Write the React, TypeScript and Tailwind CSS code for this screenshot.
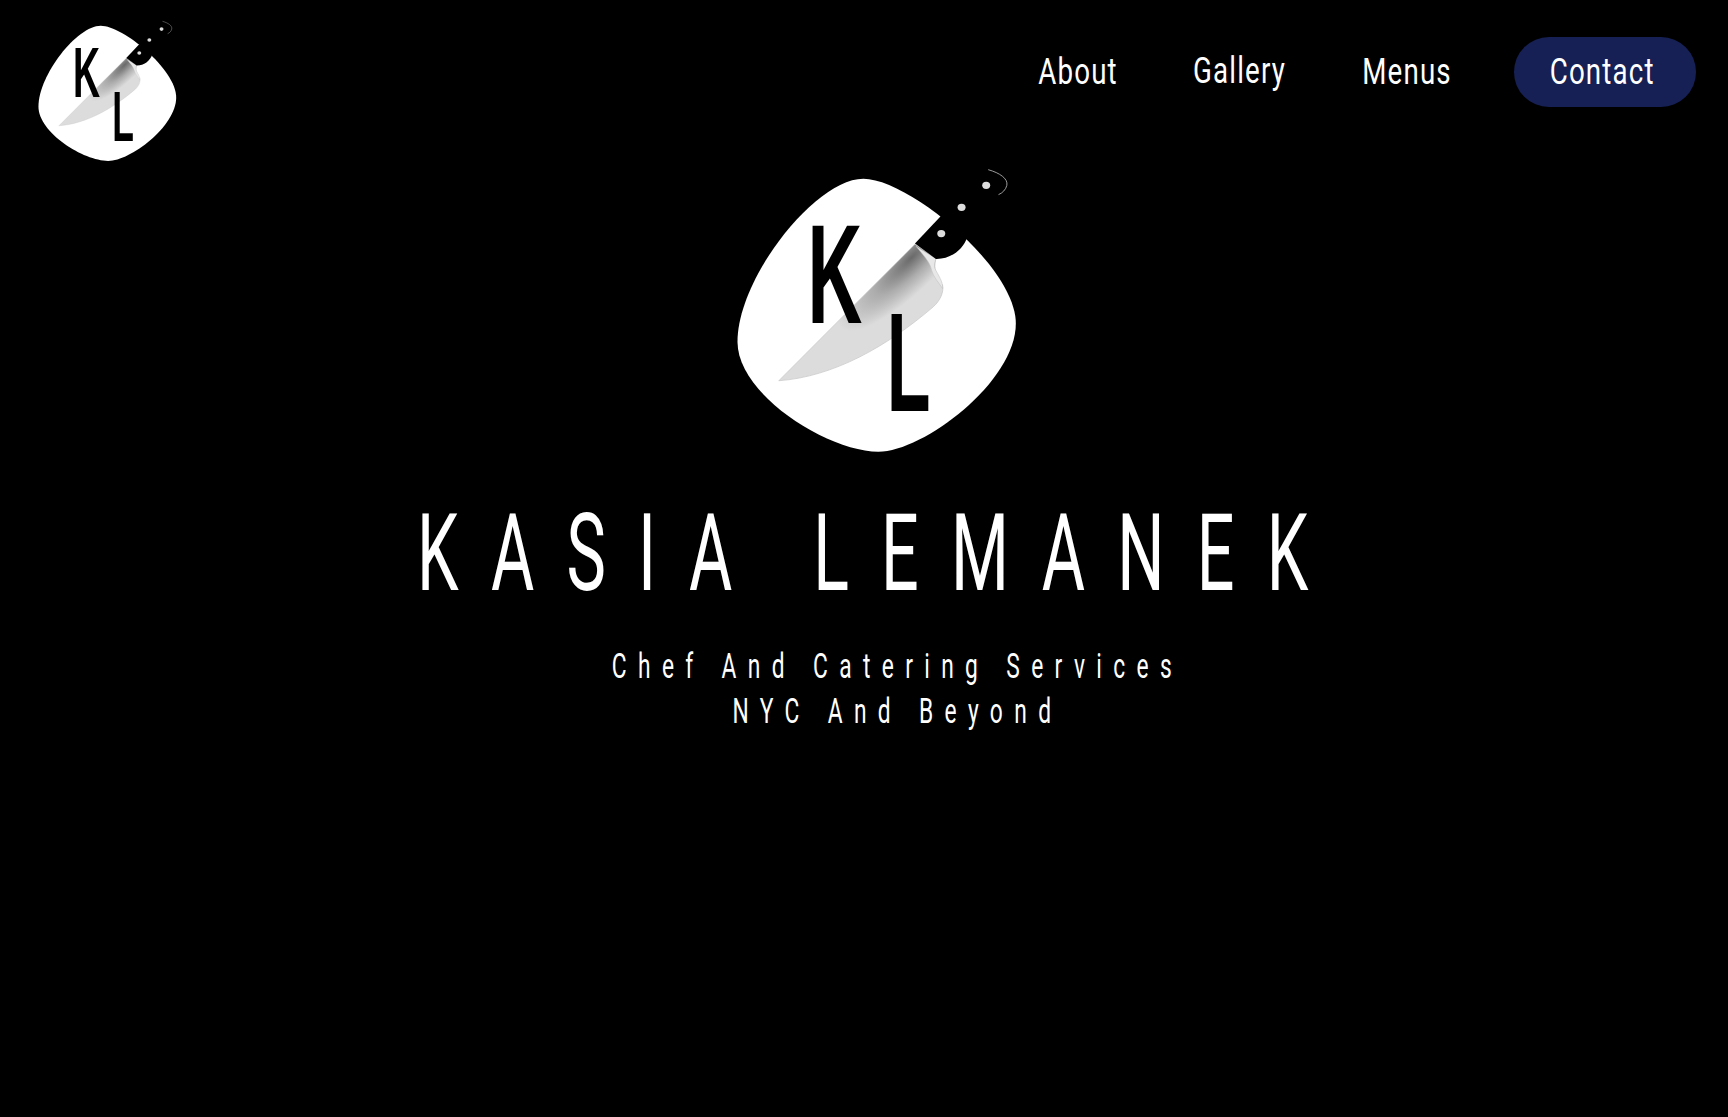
import React from "react";

function Logo({ id, className }: { id: string; className: string }) {
  return (
    <svg viewBox="0 50 1050 880" className={className}>
      <defs>
        <radialGradient id={id} gradientUnits="userSpaceOnUse" cx="0" cy="0" r="1" gradientTransform="translate(635,322) rotate(-45) scale(300,90)">
          <stop offset="0" stopColor="#6a6a6a" />
          <stop offset="0.5" stopColor="#acacac" />
          <stop offset="1" stopColor="#dcdcdc" />
        </radialGradient>
      </defs>
      <path
        d="M490,85 C625,85 948,350 948,520 C948,695 670,905 535,905 C385,905 112,735 112,575 C112,385 345,85 490,85 Z"
        fill="#fff"
      />
      <path d="M645,282 L236,692 C400,680 560,590 700,470 C722,450 732,425 728,405 C712,380 698,360 708,325 Z" fill={`url(#${id})`} stroke="#c4c4c4" strokeWidth="2" />
      <path d="M648,288 C670,315 690,335 695,360 C700,380 715,395 728,415 C730,395 715,375 705,355 C702,345 705,335 708,325 Z" fill="#e8e8e8" stroke="#bdbdbd" strokeWidth="1.5" />
      <path d="M645,280 L725,195 L803,258 C790,300 750,327 708,326 Z" fill="#000" />
      <ellipse cx="724" cy="250" rx="12" ry="11" fill="#ddd" />
      <ellipse cx="785" cy="171" rx="12" ry="11" fill="#ddd" />
      <ellipse cx="859" cy="105" rx="12" ry="11" fill="#ddd" />
      <path d="M865,58 C900,68 925,85 921,105 C918,118 908,128 896,133" fill="none" stroke="#bbb" strokeWidth="2.5" />
      <text x="0" y="0" transform="translate(322,518) scale(0.54,1)" fontFamily="'Liberation Sans'" fontWeight="700" fontSize="422" fill="#000">K</text>
      <text x="0" y="0" transform="translate(560,782) scale(0.51,1)" fontFamily="'Liberation Sans'" fontWeight="700" fontSize="422" fill="#000">L</text>
    </svg>
  );
}

const face = "font-['Roboto',sans-serif]";

function NavItem({ label, w, cls = "" }: { label: string; w: string; cls?: string }) {
  return (
    <a className={`${w} ${cls} flex justify-center whitespace-nowrap text-[36px] leading-[44px] tracking-[1.5px] text-white scale-x-[0.77]`}>{label}</a>
  );
}

export default function App() {
  return (
    <div className={`min-h-screen bg-black ${face}`}>
      <header className="flex items-start justify-between pl-5 pr-[32px] pt-5">
        <Logo id="g1" className="h-[145px] w-[173px]" />
        <nav className="mt-[17px] flex items-center">
          <NavItem label="About" w="w-[78px]" />
          <NavItem label="Gallery" w="w-[89px] ml-[78px]" cls="-mt-[2px]" />
          <NavItem label="Menus" w="w-[86px] ml-[80px]" />
          <a className="ml-[64px] flex h-[70px] w-[182px] items-center justify-center rounded-[35px] bg-[#162055] text-white">
            <span className="whitespace-nowrap text-[36px] leading-[44px] tracking-[1.5px] scale-x-[0.77] -translate-x-[3px]">Contact</span>
          </a>
        </nav>
      </header>
      <main className="flex flex-col items-center pt-[2px]">
        <Logo id="g2" className="ml-[22px] h-[293px] w-[350px]" />
        <h1 className="ml-[30px] mt-[35px] whitespace-nowrap text-[107px] font-normal leading-[118px] tracking-[52px] text-white scale-x-[0.62]">KASIA LEMANEK</h1>
        <p className="ml-[66px] mt-[31px] whitespace-nowrap text-center text-[35px] leading-[45px] tracking-[17.5px] text-white scale-x-[0.65]">
          Chef And Catering Services
          <br />
          NYC And Beyond
        </p>
      </main>
    </div>
  );
}
